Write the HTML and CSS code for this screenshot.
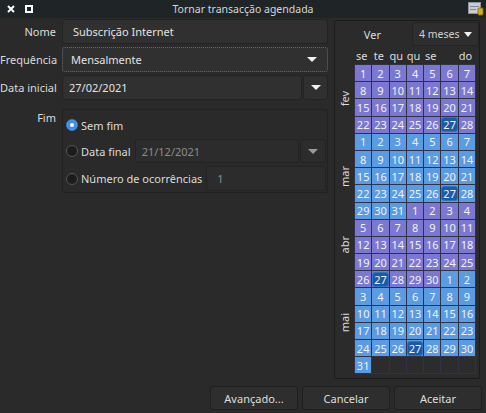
FILE: index.html
```html
<!DOCTYPE html>
<html lang="pt">
<head>
  <meta charset="UTF-8">
  <title>Tornar transacção agendada</title>
  <link rel="stylesheet" href="styles.css">
</head>
<body>
  <!-- Title bar -->
  <div class="titlebar">
    <div class="tb-buttons">
      <svg width="8" height="8" viewBox="0 0 8 8"><path d="M1 1 L7 7 M7 1 L1 7" stroke="#fff" stroke-width="2"/></svg>
      <svg width="8" height="8" viewBox="0 0 8 8"><rect x="1" y="1" width="6" height="6" fill="none" stroke="#fff" stroke-width="2"/><rect x="2.5" y="3" width="3" height="2.5" fill="#1f2427"/></svg>
    </div>
    <div class="tb-title">Tornar transacção agendada</div>
    <div class="tb-app">
      <svg width="16" height="14" viewBox="0 0 16 14">
        <rect x="0.5" y="0.5" width="12" height="11" fill="#c9cdd2" stroke="#8c9298"/>
        <rect x="2" y="4" width="9" height="1" fill="#7f8a96"/>
        <rect x="2" y="7" width="6" height="1" fill="#7f8a96"/>
        <rect x="10" y="6" width="5" height="7" rx="1" fill="#d4b01c" stroke="#8a7210"/>
      </svg>
    </div>
  </div>

  <div class="main">
    <!-- Form -->
    <div class="form">
      <div class="label">Nome</div>
      <div class="field">Subscrição Internet</div>

      <div class="label">Frequência</div>
      <div class="field combo focus">Mensalmente<span class="arrow"></span></div>

      <div class="label">Data inicial</div>
      <div class="date-row">
        <div class="field date">27/02/2021</div>
        <div class="field drop"><span class="arrow"></span></div>
      </div>

      <div class="label fim">Fim</div>
      <div class="group">
        <div class="radio-row first">
          <span class="radio checked"></span>Sem fim
        </div>
        <div class="radio-row">
          <span class="radio"></span><span class="rtext">Data final</span>
          <div class="field date disabled">21/12/2021</div>
          <div class="field drop disabled"><span class="arrow dim"></span></div>
        </div>
        <div class="radio-row">
          <span class="radio"></span><span class="rtext">Número de ocorrências</span>
          <div class="field spin disabled">1</div>
        </div>
      </div>
    </div>

    <!-- Calendar -->
    <div class="calendar">
      <div class="cal-top">
        <span class="ver">Ver</span>
        <div class="field combo small">4 meses<span class="arrow"></span></div>
      </div>
      <div class="cal-head">
        <span>se</span><span>te</span><span>qu</span><span>qu</span><span>se</span><span></span><span>do</span>
      </div>
      <div class="cal-body">
        <div class="months">
          <span class="month m-fev">fev</span>
          <span class="month m-mar">mar</span>
          <span class="month m-abr">abr</span>
          <span class="month m-mai">mai</span>
        </div>
        <div class="days" id="days"></div>
      </div>
    </div>
  </div>

  <!-- Buttons -->
  <div class="actions">
    <button>Avançado...</button>
    <button>Cancelar</button>
    <button>Aceitar</button>
  </div>

  <script>
    // build the four months, alternating colours
    var months = [28, 31, 30, 31];
    var days = document.getElementById('days');
    months.forEach(function (len, i) {
      for (var d = 1; d <= len; d++) {
        var cell = document.createElement('span');
        cell.className = 'day ' + (i % 2 ? 'blue' : 'purple');
        if (d === 27) {
          cell.innerHTML = '<b class="today">27</b>';
        } else {
          cell.textContent = d;
        }
        days.appendChild(cell);
      }
    });
    for (var e = 0; e < 6; e++) {
      var empty = document.createElement('span');
      empty.className = 'day empty';
      days.appendChild(empty);
    }
  </script>
</body>
</html>
```

FILE: styles.css
```css
* {
  box-sizing: border-box;
}

body {
  margin: 0;
  width: 486px;
  height: 413px;
  overflow: hidden;
  background: #2a2a2a;
  color: #dcdcdc;
  font-family: 'Noto Sans', sans-serif;
  font-size: 11px;
}

/* Title bar */
.titlebar {
  height: 18px;
  background: #1f2427;
  display: flex;
  align-items: center;
  position: relative;
}

.tb-buttons {
  display: flex;
  gap: 10px;
  padding-left: 7px;
}

.tb-title {
  position: absolute;
  left: 0;
  right: 0;
  text-align: center;
  font-size: 10.5px;
  color: #d6d6d6;
  pointer-events: none;
}

.tb-app {
  margin-left: auto;
  padding-right: 2px;
  height: 14px;
}

/* Main area */
.main {
  display: flex;
  gap: 6px;
  padding: 1px 6px 0 0;
  height: 366px;
}

.form {
  width: 328px;
  display: grid;
  grid-template-columns: 56px 266px;
  column-gap: 6px;
  row-gap: 3px;
  align-content: start;
}

.label {
  text-align: right;
  line-height: 25px;
  white-space: nowrap;
}

.field {
  height: 25px;
  background: #303030;
  border: 1px solid #232323;
  border-radius: 3px;
  padding: 0 10px;
  display: flex;
  align-items: center;
  color: #e2e2e2;
  white-space: nowrap;
}

.combo {
  justify-content: space-between;
}

.combo.focus {
  border: 1px dotted #6a6a6a;
  padding-left: 8px;
}

.arrow {
  width: 0;
  height: 0;
  border-left: 5px solid transparent;
  border-right: 5px solid transparent;
  border-top: 5px solid #f0f0f0;
}

.arrow.dim {
  border-top-color: #9a9a9a;
}

.date-row {
  display: flex;
  gap: 1px;
}

.date {
  flex: 1;
  padding-left: 6px;
}

.drop {
  width: 25px;
  padding: 0;
  justify-content: center;
}

.disabled {
  color: #8c8c8c;
  background: #2c2c2c;
}

.label.fim {
  margin-top: 6px;
  line-height: 18px;
}

.group {
  margin-top: 6px;
  height: 84px;
  border: 1px solid #222;
  border-radius: 2px;
  padding: 6px 1px 0 3px;
  display: flex;
  flex-direction: column;
  gap: 3px;
}

.radio-row {
  display: flex;
  align-items: center;
  height: 24px;
}

.radio-row.first {
  height: 18px;
  margin-bottom: 2px;
}

.radio-row:last-child {
  height: 25px;
}

.radio {
  width: 12px;
  height: 12px;
  border-radius: 50%;
  background: #1c1c1c;
  border: 1px solid #555;
  margin-right: 3px;
  flex: none;
}

.radio.checked {
  background: #3d8fe6;
  border-color: #2f78c8;
  box-shadow: inset 0 0 0 3px #3d8fe6, inset 0 0 0 6px #fff;
}

.rtext {
  margin-right: 4px;
}

.radio-row .date {
  flex: 1;
  height: 24px;
  padding-left: 6px;
}

.radio-row .drop {
  height: 24px;
  width: 26px;
  margin-left: 1px;
}

.spin {
  flex: 1;
  padding-left: 10px;
}

/* Calendar */
.calendar {
  width: 146px;
  height: 359px;
  margin-top: 1px;
  border: 1px solid #1c1c1c;
  border-radius: 2px;
  background: #2b2b2b;
  display: flex;
  flex-direction: column;
}

.cal-top {
  display: flex;
  justify-content: flex-end;
  align-items: center;
  padding: 1px 0 0;
}

.ver {
  margin-right: 31px;
}

.field.small {
  width: 67px;
  height: 24px;
  padding: 0 6px 0 6px;
  background: #2e2e2e;
  color: #d0d0d0;
  font-size: 10.5px;
}

.field.small .arrow {
  border-left-width: 4.5px;
  border-right-width: 4.5px;
}

.cal-head {
  display: grid;
  grid-template-columns: repeat(7, 17.3px);
  margin: 2px 0 0 18px;
  height: 16px;
  text-align: center;
  line-height: 16px;
}

.cal-body {
  display: flex;
  gap: 2px;
  padding-left: 1px;
}

.months {
  width: 16px;
  display: grid;
  grid-template-rows: repeat(18, 16.2px);
  row-gap: 1px;
  padding-top: 1px;
}

.month {
  grid-column: 1;
  writing-mode: vertical-rl;
  transform: rotate(180deg);
  align-self: center;
  justify-self: center;
}

.m-fev { grid-row: 1 / 5; }
.m-mar { grid-row: 5 / 10; }
.m-abr { grid-row: 9 / 14; }
.m-mai { grid-row: 13 / 19; }

.days {
  display: grid;
  grid-template-columns: repeat(7, 16.3px);
  grid-auto-rows: 16.2px;
  gap: 1px;
  padding: 1px;
  background: #303245;
}

.day {
  display: flex;
  align-items: center;
  justify-content: center;
  color: #f2f2f2;
  font-size: 11px;
}

.purple {
  background: #7c78d2;
}

.blue {
  background: #5a9be2;
}

.empty {
  background: #2c2c2c;
}

.today {
  font-weight: normal;
  background: #1c5aa6;
  border: 1px solid #2f73c2;
  border-radius: 3px;
  padding: 0 1px;
  line-height: 13px;
}

/* Bottom buttons */
.actions {
  display: flex;
  justify-content: flex-end;
  gap: 4px;
  padding: 2px 4px 0 0;
}

button {
  width: 88px;
  height: 24px;
  background: #2e2e2e;
  border: 1px solid #1f1f1f;
  border-radius: 3px;
  color: #dedede;
  font-family: 'Noto Sans', sans-serif;
  font-size: 11px;
}
```
